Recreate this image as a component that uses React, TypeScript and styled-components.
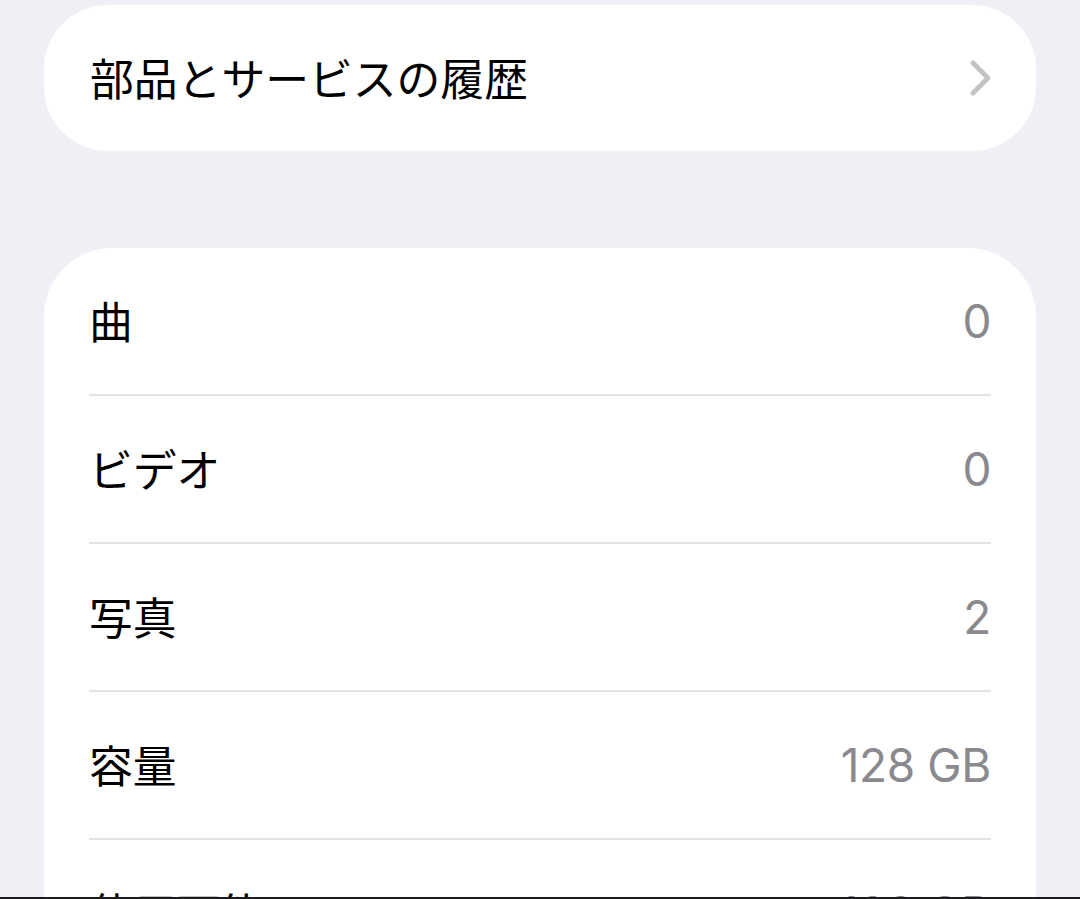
import React from 'react';
import styled, { createGlobalStyle } from 'styled-components';

const GlobalStyle = createGlobalStyle`
  html, body {
    margin: 0;
    padding: 0;
    background: #f0eff5;
  }
  body {
    font-family: "Inter", "Noto Sans CJK JP", sans-serif;
    -webkit-font-smoothing: antialiased;
  }
`;

const Screen = styled.div`
  box-sizing: border-box;
  height: 899px;
  overflow: hidden;
  padding: 5px 44px 0;
  background: #f0eff5;
  border-bottom: 2px solid #1c1c1e;
  display: flex;
  flex-direction: column;
  gap: 97px;
`;

interface CardProps {
  pill?: boolean;
}

const Card = styled.div<CardProps>`
  background: #ffffff;
  border-radius: ${(props) => (props.pill ? '64px' : '68px')};
  flex-shrink: 0;
`;

const LinkRow = styled.div`
  height: 146px;
  display: flex;
  align-items: center;
  justify-content: space-between;
  padding: 0 46px;
`;

const InfoRow = styled.div`
  height: 146px;
  margin: 0 45px;
  display: flex;
  align-items: center;
  justify-content: space-between;
  border-bottom: 2px solid #e3e3e6;
  &:last-child {
    border-bottom: none;
  }
`;

const Label = styled.span`
  font-family: "Noto Sans CJK JP", sans-serif;
  font-size: 43.8px;
  color: #000000;
  line-height: 1;
`;

const Value = styled.span`
  font-family: "Inter", "Noto Sans CJK JP", sans-serif;
  font-size: 46px;
  color: #8a8a8e;
  line-height: 1;
  letter-spacing: -0.4px;
`;

const Chevron = () => (
  <svg width="24" height="38" viewBox="0 0 24 38">
    <path
      d="M4 4 L19 19 L4 34"
      fill="none"
      stroke="#c4c4c7"
      strokeWidth="5"
      strokeLinecap="round"
      strokeLinejoin="round"
    />
  </svg>
);

const ChevronWrap = styled.span`
  display: flex;
  margin-right: -3px;
`;

const rows = [
  { label: '曲', value: '0' },
  { label: 'ビデオ', value: '0' },
  { label: '写真', value: '2' },
  { label: '容量', value: '128 GB' },
  { label: '使用可能', value: '109 GB' },
];

export default function App() {
  return (
    <>
      <GlobalStyle />
      <Screen>
        <Card pill>
          <LinkRow>
            <Label>部品とサービスの履歴</Label>
            <ChevronWrap>
              <Chevron />
            </ChevronWrap>
          </LinkRow>
        </Card>
        <Card>
          {rows.map((r) => (
            <InfoRow key={r.label}>
              <Label>{r.label}</Label>
              <Value>{r.value}</Value>
            </InfoRow>
          ))}
        </Card>
      </Screen>
    </>
  );
}
